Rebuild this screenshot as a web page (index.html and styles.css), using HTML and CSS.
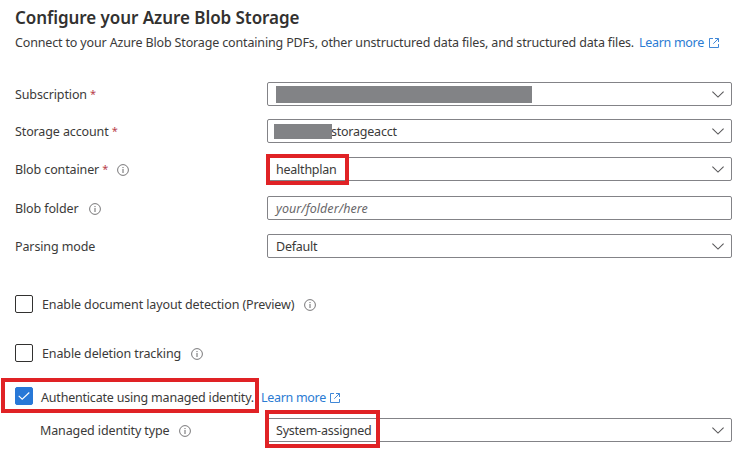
FILE: index.html
```html
<!DOCTYPE html>
<html lang="en">
<head>
<meta charset="utf-8">
<title>Configure your Azure Blob Storage</title>
<link rel="stylesheet" href="styles.css">
</head>
<body>
<svg class="defs" width="0" height="0">
  <symbol id="info" viewBox="0 0 12 12"><circle cx="6" cy="6" r="5.4" fill="none" stroke="currentColor" stroke-width=".9"/><path d="M6 5v4M6 3v1.1" stroke="currentColor" stroke-width="1"/></symbol>
  <symbol id="chevron" viewBox="0 0 12 7"><path d="M.4.6 6 6.1 11.6.6" fill="none" stroke="currentColor" stroke-width="1.1"/></symbol>
  <symbol id="external" viewBox="0 0 10 10"><path d="M4 .5H.5v9h9V6M6 .5h3.500v3.500M9.300.7 4.300 5.700" fill="none" stroke="currentColor" stroke-width=".9"/></symbol>
</svg>
<main class="form">
  <h1 class="title">Configure your Azure Blob Storage</h1>
  <p class="intro"><span class="intro-text">Connect to your Azure Blob Storage containing PDFs, other unstructured data files, and structured data files.</span><a class="link">Learn more</a><svg class="external"><use href="#external"/></svg></p>

  <div class="row row-subscription">
    <label class="label">Subscription <span class="required">*</span></label>
    <div class="field"><span class="redacted redacted-long"></span><svg class="chevron"><use href="#chevron"/></svg></div>
  </div>
  <div class="row row-account">
    <label class="label">Storage account <span class="required">*</span></label>
    <div class="field field-account"><span class="redacted"></span><span class="value">storageacct</span><svg class="chevron"><use href="#chevron"/></svg></div>
  </div>
  <div class="row row-container">
    <label class="label">Blob container <span class="required">*</span><svg class="info"><use href="#info"/></svg></label>
    <div class="field"><span class="value">healthplan</span><svg class="chevron"><use href="#chevron"/></svg><span class="highlight highlight-container"></span></div>
  </div>
  <div class="row row-folder">
    <label class="label">Blob folder<svg class="info"><use href="#info"/></svg></label>
    <div class="field"><span class="placeholder">your/folder/here</span></div>
  </div>
  <div class="row row-parsing">
    <label class="label">Parsing mode</label>
    <div class="field"><span class="value">Default</span><svg class="chevron"><use href="#chevron"/></svg></div>
  </div>

  <div class="option option-layout"><span class="checkbox"></span><span class="option-text">Enable document layout detection (Preview)</span><svg class="info"><use href="#info"/></svg></div>
  <div class="option option-deletion"><span class="checkbox"></span><span class="option-text">Enable deletion tracking</span><svg class="info"><use href="#info"/></svg></div>
  <div class="option option-identity">
    <span class="checkbox checked"><svg class="check" viewBox="0 0 12 8"><path d="M.7 3.800 4.200 7.200 11.300.5" fill="none" stroke="#fff" stroke-width="1.1"/></svg></span><span class="option-text">Authenticate using managed identity.</span><a class="link">Learn more</a><svg class="external"><use href="#external"/></svg>
    <span class="highlight highlight-identity"></span>
  </div>
  <div class="row row-type">
    <label class="label">Managed identity type<svg class="info"><use href="#info"/></svg></label>
    <div class="field"><span class="value">System-assigned</span><svg class="chevron"><use href="#chevron"/></svg><span class="highlight highlight-type"></span></div>
  </div>
</main>
</body>
</html>
```
FILE: styles.css
```css
* { box-sizing: border-box; }
body {
  margin: 0;
  background: #fff;
  color: #3b3a39;
  font: 12.5px/18px "Noto Sans", "Open Sans", sans-serif;
  letter-spacing: -0.12px;
}
.defs { position: absolute; }
svg { flex: none; }
.form { padding: 6px 16px 0 15px; height: 449px; overflow: hidden; }
.title { margin: 0; height: 24px; color: #323130; font-size: 17px; line-height: 24px; font-weight: 600; letter-spacing: -0.06px; white-space: nowrap; }
.intro { margin: 4px 0 0; height: 18px; display: flex; align-items: center; white-space: nowrap; }
.intro-text { width: 624px; letter-spacing: -0.155px; }
.link { width: 65px; color: #2b7bd3; letter-spacing: -0.3px; }
.external { width: 10px; height: 10px; margin: 0 0 1px 5px; color: #2b7bd3; }
.row { display: grid; grid-template-columns: 252px 465px; height: 24px; }
.row-subscription { margin-top: 30px; }
.row-account { margin-top: 13px; }
.row-container { margin-top: 14px; }
.row-folder { margin-top: 15px; }
.row-parsing { margin-top: 14px; }
.label { display: flex; align-items: center; padding-top: 2px; white-space: pre; }
.required { width: 5px; margin-bottom: 3px; color: #b8414b; font-size: 11px; }
.info { width: 12px; height: 12px; margin-left: 10px; color: #69686a; }
.field {
  position: relative;
  display: flex;
  align-items: center;
  padding: 0 7px 0 8px;
  border: 1px solid #838387;
  border-radius: 2px;
}
.chevron { width: 12px; height: 7px; margin-left: auto; color: #59585a; }
.redacted { position: relative; z-index: 1; width: 58px; height: 15px; background: #828386; }
.redacted-long { width: 256px; height: 17px; }
.field-account { padding-left: 6px; }
.field-account .value { margin-left: -1px; }
.value { padding-top: 2px; letter-spacing: -0.23px; }
.placeholder { padding-top: 2px; font-style: italic; letter-spacing: 0.04px; color: #69686a; }
.highlight { position: absolute; border: 4px solid #e02225; }
.highlight-container { left: -2px; top: -4px; width: 83px; height: 31px; }
.highlight-type { left: -3px; top: -9px; width: 115px; height: 38px; }
.highlight-identity { left: -14px; top: -9px; width: 258px; height: 35px; }
.option { position: relative; display: flex; align-items: center; height: 18px; white-space: nowrap; }
.option-layout { margin-top: 37px; }
.option-deletion { margin-top: 31px; }
.option-identity { margin-top: 25px; }
.option-text, .option .link { padding-top: 2px; }
.option-identity .option-text, .option-identity .link { padding-top: 4px; }
.option .info { margin-top: 1px; }
.option .external { margin: 3px 0 0 4px; }
.checkbox { width: 18px; height: 18px; flex: none; margin-right: 9px; border: 1px solid #323130; border-radius: 2px; }
.checked { display: grid; place-items: center; margin-right: 8px; border-color: #2878d7; background: #2878d7; }
.check { width: 12px; height: 8px; }
.option-identity .option-text { width: 220px; letter-spacing: -0.2px; }
.row-type { margin-top: 13px; }
.row-type .label { padding-left: 25px; }
```
